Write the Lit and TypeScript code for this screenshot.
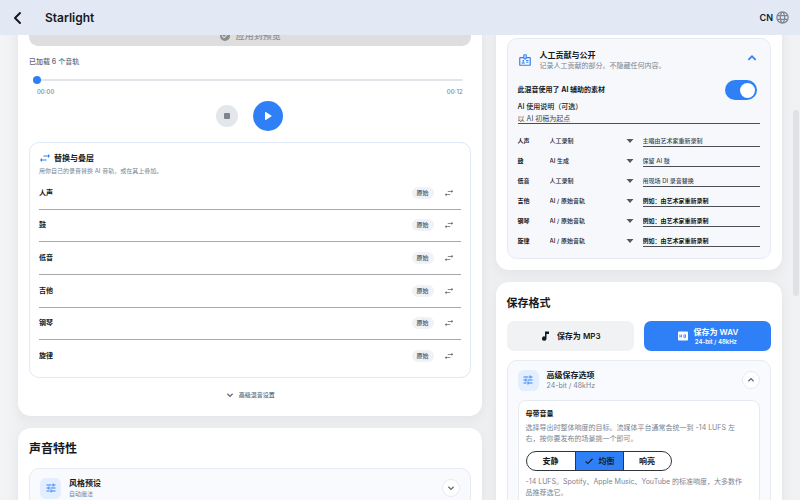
import { LitElement, html, css, svg } from "lit";
import { customElement, state } from "lit/decorators.js";

const path = (d: string) => html`<svg viewBox="0 0 24 24" aria-hidden="true">${svg`<path d=${d} />`}</svg>`;

const SWAP = "M22 8l-4-4v3h-9v2h9v3zM2 16l4 4v-3h9v-2H6v-3z";
const TUNE = "M3 17v2h6v-2H3zM3 5v2h10V5H3zm10 16v-2h8v-2h-8v-2h-2v6h2zM7 9v2H3v2h4v2h2V9H7zm14 4v-2H11v2h10zm-6-4h2V7h4V5h-4V3h-2v6z";
const DOWN = "M6.800 7.800L12 13l5.200-5.200L19.300 10 12 17.300 4.700 10z";
const UP = "M6.800 16.200L12 11l5.200 5.200L19.300 14 12 6.700 4.700 14z";
const GLOBE = "M12 2a10 10 0 100 20 10 10 0 000-20zm6.900 6h-2.950a15.600 15.600 0 00-1.380-3.560A8.030 8.030 0 0118.920 8zM12 4.040c.830 1.200 1.480 2.530 1.910 3.960h-3.820c.430-1.430 1.080-2.760 1.910-3.960zM4.260 14a8.200 8.200 0 010-4h3.380a16.500 16.500 0 000 4H4.260zm.820 2h2.950c.320 1.250.780 2.450 1.380 3.560A7.990 7.990 0 015.080 16zm2.950-8H5.080a7.990 7.990 0 014.330-3.560A15.600 15.600 0 008.030 8zM12 19.960A14 14 0 0110.090 16h3.820A14 14 0 0112 19.960zM14.340 14H9.660a14.700 14.700 0 010-4h4.680a14.700 14.700 0 010 4zm.250 5.560c.600-1.110 1.060-2.310 1.380-3.560h2.950a8.030 8.030 0 01-4.330 3.560zM16.360 14a16.500 16.500 0 000-4h3.380a8.200 8.200 0 010 4h-3.380z";
const BADGE = "M20 7h-5V4a2 2 0 00-2-2h-2a2 2 0 00-2 2v3H4a2 2 0 00-2 2v11a2 2 0 002 2h16a2 2 0 002-2V9a2 2 0 00-2-2zM11 4h2v5h-2V4zm9 16H4V9h5a2 2 0 002 2h2a2 2 0 002-2h5v11zM9 15a1.500 1.500 0 100-3 1.500 1.500 0 000 3zm2.100 1.200A5 5 0 009 15.700c-.750 0-1.460.170-2.080.450A1.500 1.500 0 006 17.500V18h6v-.500c0-.600-.360-1.120-.900-1.300zM14 12h4v1.500h-4zm0 3h4v1.500h-4z";
const CHECK_CIRCLE = "M12 2a10 10 0 100 20 10 10 0 000-20zm-2 15l-5-5 1.400-1.400L10 14.200l7.600-7.600L19 8z";

const TRACKS = ["人声", "鼓", "低音", "吉他", "钢琴", "旋律"];
const SOURCES = ["人工录制", "AI 生成", "AI / 原始音轨"];
const CREDITS = [
  { source: 0, note: "主唱由艺术家重新录制" },
  { source: 1, note: "保留 AI 鼓" },
  { source: 0, note: "用现场 DI 录音替换" },
  { source: 2, note: "" },
  { source: 2, note: "" },
  { source: 2, note: "" },
];
const LEVELS = ["安静", "均衡", "响亮"];

@customElement("app-root")
export class AppRoot extends LitElement {
  @state() private level = 1;

  static styles = css`
    :host {
      display: flex;
      flex-direction: column;
      height: 100vh;
      overflow: hidden;
      position: relative;
      background: linear-gradient(90deg, #f3f4f6, #eeeff1 24px, #eeeff1 calc(100% - 24px), #f1f2f4);
      font: 7px/10px Inter, "Noto Sans CJK SC", sans-serif;
      color: #151922;
    }
    * { box-sizing: border-box; margin: 0; }
    button, input, select { font: inherit; color: inherit; border: 0; padding: 0; background: none; border-radius: 0; }
    svg { display: block; fill: currentColor; width: 100%; height: 100%; }
    .icon { flex: none; width: 12px; height: 12px; }
    .small { width: 10px; height: 10px; }
    .blue { color: #2f80f6; }

    header {
      flex: none;
      display: flex;
      align-items: center;
      height: 35px;
      padding: 0 10px 0 11px;
      background: #e2e9f5;
      z-index: 1;
    }
    .back { width: 14px; height: 16px; margin-right: 20px; }
    .back svg { fill: none; stroke: #151922; stroke-width: 2; stroke-linecap: round; stroke-linejoin: round; }
    h1 { font-size: 12px; line-height: 16px; font-weight: 600; flex: 1; }
    .lang { display: flex; align-items: center; gap: 2px; font-size: 9px; font-weight: 600; }
    .lang .icon { width: 15px; height: 15px; color: #7e858f; }

    main {
      flex: 1;
      min-height: 0;
      overflow: hidden;
      display: grid;
      grid-template-columns: 463fr 286fr;
      gap: 14px;
      align-items: start;
      padding: 0 18px;
    }
    .col { display: grid; gap: 12px; margin-top: -20px; min-width: 0; }
    .card {
      min-width: 0;
      background: #fff;
      border-radius: 13px;
      padding: 11px;
      box-shadow: 0 4px 12px rgba(30, 40, 60, 0.05);
    }
    h2 { font-size: 12px; line-height: 20px; font-weight: 700; }
    h3 { font-size: 8px; line-height: 12px; font-weight: 700; }
    .sub { color: #7b8491; }
    .tiny { font-size: 6px; }

    .apply {
      display: flex;
      align-items: center;
      justify-content: center;
      gap: 5px;
      width: 100%;
      height: 20px;
      border-radius: 0 0 9px 9px;
      background: #dedede;
      color: #8c8c8c;
      font-size: 9px;
      font-weight: 500;
    }
    .loaded { margin-top: 11px; color: #5f6975; font-weight: 500; }
    .range { display: block; appearance: none; width: calc(100% - 12px); height: 8px; margin: 9px 8px 0 4px; }
    .range::-webkit-slider-runnable-track { height: 2px; background: #e2e4e9; border-radius: 1px; }
    .range::-webkit-slider-thumb { appearance: none; width: 8px; height: 8px; margin-top: -3px; border-radius: 50%; background: #2f80f6; }
    .times { display: flex; justify-content: space-between; padding: 0 8px; margin-top: 3px; color: #7b8491; }
    .times span { font-size: 6px; font-weight: 500; }
    .player { display: flex; align-items: center; justify-content: center; gap: 15px; margin-top: 4px; }
    .stop, .play { display: grid; place-items: center; border-radius: 50%; }
    .stop { width: 22px; height: 22px; background: #e3e6ea; color: #7e858f; }
    .play { width: 30px; height: 30px; background: #2f80f6; color: #fff; }

    .panel { border: 1px solid #dfe8f7; border-radius: 10px; padding: 9px 9px 4px; margin-top: 11px; }
    .row { display: flex; align-items: center; }
    .panel .head { gap: 3px; }
    .panel .sub { margin-top: 2px; }
    .tracks { list-style: none; padding: 0; display: grid; grid-auto-rows: 1fr; min-height: 196px; margin-top: 1px; }
    .track { display: flex; align-items: center; font-weight: 700; border-bottom: 1px solid #a6a8ac; }
    .track:last-child { border-color: transparent; }
    .grow { flex: 1; min-width: 0; }
    .pill { font-size: 6px; line-height: 12px; padding: 0 5px; border-radius: 6px; background: #f0f2f5; color: #5f6975; font-weight: 600; margin-right: 9px; }
    .swap { display: grid; place-items: center; width: 12px; height: 12px; margin-right: 6px; color: #5f6975; }
    .more { display: flex; align-items: center; gap: 4px; margin: 12px auto 5px; color: #5f6975; font-size: 6px; font-weight: 500; }

    .box { border: 1px solid #e6eaf3; border-radius: 10px; background: #f8fafe; padding: 8px 10px; margin-top: 9px; }
    .tile { flex: none; display: grid; place-items: center; width: 21px; height: 21px; border-radius: 6px; background: #e3eefe; color: #2f80f6; margin-right: 8px; }
    .round { display: grid; place-items: center; width: 18px; height: 18px; border: 1px solid #e6eaf3; border-radius: 50%; background: #fff; color: #5f6975; }

    .box.credit { margin-top: 12px; padding: 10px 10px 7px; background: #f6f8fc; }
    .badge { width: 14px; height: 14px; margin-right: 8px; }
    .credit .chev { width: 14px; height: 14px; margin: 0 1px 4px 0; }
    .use { margin-top: 9px; font-weight: 700; }
    .switch { appearance: none; width: 32px; height: 20px; border-radius: 10px; background: #2f80f6; margin-right: 3px; display: flex; align-items: center; justify-content: flex-end; padding: 0 2px; }
    .switch::before { content: ""; width: 15px; height: 15px; border-radius: 50%; background: #fff; }
    .switch:not(:checked) { justify-content: flex-start; background: #b4bac4; }
    .field { display: block; margin-top: 2px; font-weight: 500; }
    .line { display: block; width: 100%; border-bottom: 1px solid #4b4e55; color: #3d4857; font-weight: 400; }
    .field .line { height: 12px; }
    .credits { width: 100%; border-collapse: collapse; table-layout: fixed; margin-top: 7px; font-size: 6px; }
    .credits th, .credits td { padding: 0; height: 20px; text-align: left; vertical-align: middle; }
    .credits th { width: 32px; font-weight: 700; }
    .credits .src { width: 93px; }
    .pick { display: grid; margin-right: 7px; align-items: center; }
    .pick select, .pick .icon { grid-area: 1 / 1; }
    .pick select { appearance: none; width: 100%; height: 12px; font-weight: 500; }
    .pick .icon { justify-self: end; pointer-events: none; color: #555a62; }
    .credits .line { height: 11px; font-weight: 500; }
    .line::placeholder { color: #151922; opacity: 1; font-weight: 600; }

    .save h2 { font-size: 11px; }
    .formats { display: grid; grid-template-columns: 1fr 1fr; gap: 10px; margin-top: 8px; }
    .format { display: flex; align-items: center; justify-content: center; gap: 5px; height: 30px; border-radius: 7px; background: #f1f2f4; font-size: 8px; font-weight: 600; }
    .format.on { background: #2f80f6; color: #fff; }
    .format small { display: block; font-size: 6px; line-height: 9px; }
    .inner { border: 1px solid #e6eaf3; border-radius: 8px; background: #fff; padding: 7px; margin-top: 9px; }
    .inner h4 { font-size: 7px; line-height: 12px; font-weight: 700; }
    .inner p { line-height: 11px; }
    .inner h4 + p { margin-top: 2px; }
    .segs { display: inline-grid; grid-template-columns: repeat(3, 48px); height: 20px; margin: 7px 0 5px; padding: 0; border: 1px solid #30343b; border-radius: 10px; overflow: hidden; vertical-align: top; }
    .seg { display: flex; align-items: center; justify-content: center; gap: 5px; font-size: 8px; font-weight: 600; cursor: pointer; }
    .seg + .seg { border-left: 1px solid #30343b; }
    .seg input { appearance: none; position: absolute; opacity: 0; }
    .seg.on { background: #2f80f6; }

    .bar { position: absolute; right: 1px; top: 110px; width: 6px; height: 186px; border-radius: 3px; background: #e0e2e5; }
  `;

  private head(title: string, sub: string, open: boolean, cls = "") {
    return html`<div class="row">
      <span class="tile"><span class="icon">${path(TUNE)}</span></span>
      <div class="grow"><h3>${title}</h3><p class="sub ${cls}">${sub}</p></div>
      <button class="round" aria-label=${title} aria-expanded=${open}><span class="icon small">${path(open ? UP : DOWN)}</span></button>
    </div>`;
  }

  render() {
    return html`
      <header>
        <button class="back" aria-label="返回"><svg viewBox="0 0 14 16"><path d="M9 3L4 8l5 5" /></svg></button>
        <h1>Starlight</h1>
        <button class="lang">CN <span class="icon">${path(GLOBE)}</span></button>
      </header>
      <main>
        <div class="col">
          <section class="card">
            <button class="apply" disabled><span class="icon">${path(CHECK_CIRCLE)}</span>应用到预览</button>
            <p class="loaded">已加载 6 个音轨</p>
            <input class="range" type="range" min="0" max="12" value="0" aria-label="播放进度" />
            <div class="times"><span>00:00</span><span>00:12</span></div>
            <div class="player">
              <button class="stop" aria-label="停止"><span class="icon">${path("M8 6h8a2 2 0 012 2v8a2 2 0 01-2 2H8a2 2 0 01-2-2V8a2 2 0 012-2z")}</span></button>
              <button class="play" aria-label="播放"><span class="icon">${path("M6 5v14a1 1 0 001.500.900l11-7a1 1 0 000-1.700l-11-7A1 1 0 006 5z")}</span></button>
            </div>
            <div class="panel">
              <div class="row head"><span class="icon blue">${path(SWAP)}</span><h3>替换与叠层</h3></div>
              <p class="sub tiny">用你自己的录音替换 AI 音轨，或在其上叠加。</p>
              <ul class="tracks">
                ${TRACKS.map((t) => html`<li class="track">
                  <span class="grow">${t}</span><span class="pill">原始</span>
                  <button class="swap" aria-label="替换${t}"><span class="icon small">${path(SWAP)}</span></button>
                </li>`)}
              </ul>
            </div>
            <button class="more"><span class="icon small">${path(DOWN)}</span>高级混音设置</button>
          </section>
          <section class="card">
            <h2>声音特性</h2>
            <div class="box">${this.head("风格预设", "自动魔法", false, "tiny")}</div>
          </section>
        </div>
        <div class="col">
          <section class="card">
            <div class="box credit">
              <div class="row">
                <span class="icon badge blue">${path(BADGE)}</span>
                <div class="grow"><h3>人工贡献与公开</h3><p class="sub">记录人工贡献的部分。不隐藏任何内容。</p></div>
                <button class="chev blue" aria-label="收起">${path(UP)}</button>
              </div>
              <label class="row use"><span class="grow">此混音使用了 AI 辅助的素材</span><input class="switch" type="checkbox" role="switch" checked /></label>
              <label class="field">AI 使用说明（可选）<input class="line" type="text" value="以 AI 初稿为起点" /></label>
              <table class="credits">
                ${CREDITS.map((c, i) => html`<tr>
                  <th scope="row">${TRACKS[i]}</th>
                  <td class="src"><div class="pick">
                    <select aria-label="${TRACKS[i]}来源">${SOURCES.map((s, k) => html`<option ?selected=${k === c.source}>${s}</option>`)}</select>
                    <span class="icon">${path("M5 8h14l-7 8z")}</span>
                  </div></td>
                  <td><input class="line" type="text" aria-label="${TRACKS[i]}说明" placeholder="例如：由艺术家重新录制" .value=${c.note} /></td>
                </tr>`)}
              </table>
            </div>
          </section>
          <section class="card save">
            <h2>保存格式</h2>
            <div class="formats">
              <button class="format"><span class="icon">${path("M10 3h8v5h-5v9a4.500 4.500 0 11-3-4.200z")}</span>保存为 MP3</button>
              <button class="format on">
                <span class="icon"><svg viewBox="0 0 24 24"><path fill-rule="evenodd" d="M4 3h16a2 2 0 012 2v14a2 2 0 01-2 2H4a2 2 0 01-2-2V5a2 2 0 012-2zM5 9v6h1.500v-2.200h2V15H10V9H8.500v2.300h-2V9zM14 9h3a1 1 0 011 1v4a1 1 0 01-1 1h-.500v1.500H15V15h-1a1 1 0 01-1-1v-4a1 1 0 011-1zm.500 1.500v3h2v-3z" /></svg></span>
                <span>保存为 WAV<small>24-bit / 48kHz</small></span>
              </button>
            </div>
            <div class="box">
              ${this.head("高级保存选项", "24-bit / 48kHz", true)}
              <div class="inner">
                <h4>母带音量</h4>
                <p class="sub">选择导出时整体响度的目标。流媒体平台通常会统一到 -14 LUFS 左<br />右，按你要发布的场景挑一个即可。</p>
                <div class="segs" role="radiogroup" aria-label="母带音量">
                  ${LEVELS.map((l, i) => html`<label class="seg ${i === this.level ? "on" : ""}">
                    <input type="radio" name="level" .checked=${i === this.level} @change=${() => (this.level = i)} />
                    ${i === this.level ? html`<span class="icon small">${path("M9 16.200L4.800 12l-1.900 1.900L9 20 21.500 7.500l-1.900-1.900z")}</span>` : ""}${l}
                  </label>`)}
                </div>
                <p class="sub">-14 LUFS。Spotify、Apple Music、YouTube 的标准响度，大多数作<br />品推荐选它。</p>
              </div>
            </div>
          </section>
        </div>
      </main>
      <div class="bar"></div>
    `;
  }
}
